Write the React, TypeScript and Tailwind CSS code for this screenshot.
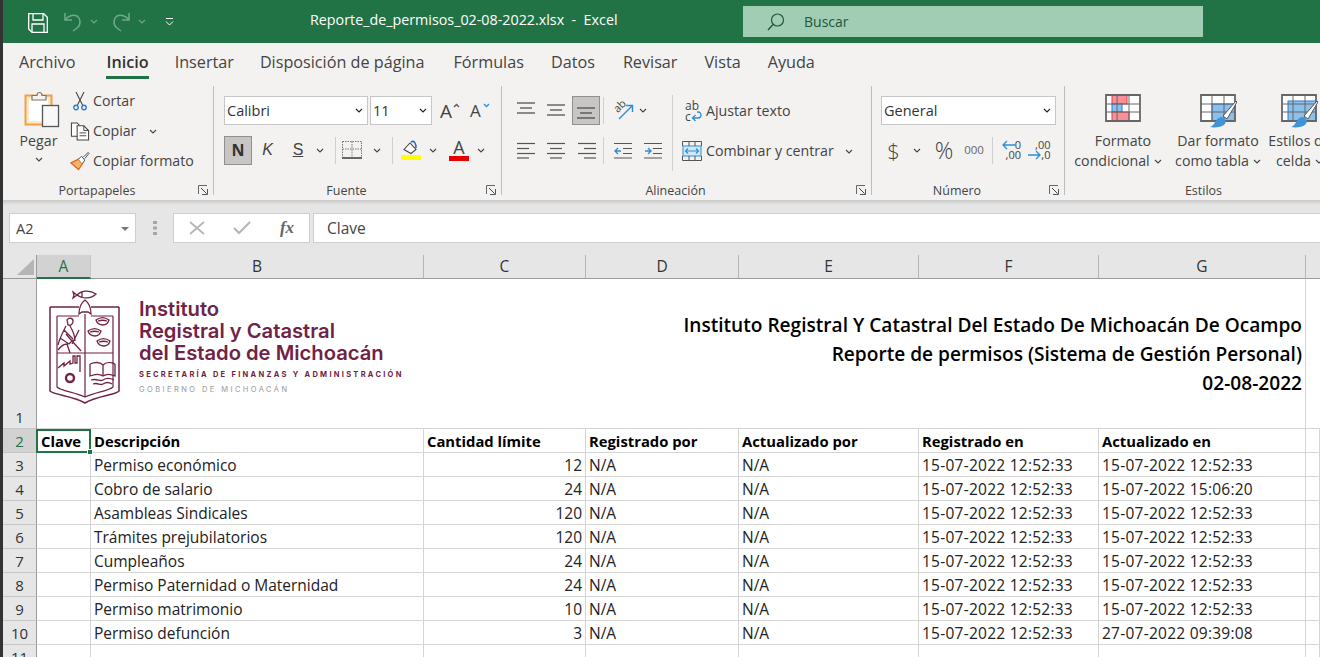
import type { ReactNode } from "react"

const UI = "font-['Open_Sans',sans-serif]"

const columns = [
  { id: "A", w: "w-[54px]" },
  { id: "B", w: "w-[333px]" },
  { id: "C", w: "w-[162px]" },
  { id: "D", w: "w-[153px]" },
  { id: "E", w: "w-[180px]" },
  { id: "F", w: "w-[180px]" },
  { id: "G", w: "w-[207px]" },
]

const rows = [
  ["Permiso económico", "12", "15-07-2022 12:52:33"],
  ["Cobro de salario", "24", "15-07-2022 15:06:20"],
  ["Asambleas Sindicales", "120", "15-07-2022 12:52:33"],
  ["Trámites prejubilatorios", "120", "15-07-2022 12:52:33"],
  ["Cumpleaños", "24", "15-07-2022 12:52:33"],
  ["Permiso Paternidad o Maternidad", "24", "15-07-2022 12:52:33"],
  ["Permiso matrimonio", "10", "15-07-2022 12:52:33"],
  ["Permiso defunción", "3", "27-07-2022 09:39:08"],
]

function Chevron({ className = "", color = "#444" }: { className?: string; color?: string }) {
  return (
    <svg width="8" height="5" viewBox="0 0 8 5" className={`shrink-0 ${className}`}>
      <path d="M1 1l3 3 3-3" fill="none" stroke={color} strokeWidth="1.1" />
    </svg>
  )
}

function Launcher() {
  return (
    <svg width="10" height="10" viewBox="0 0 10 10" className="shrink-0">
      <path d="M.5 9V.5H9" fill="none" stroke="#666" />
      <path d="M3 3l5.5 5.5" fill="none" stroke="#444" />
      <path d="M9.5 4v5.5H4" fill="none" stroke="#555" />
    </svg>
  )
}

function AlignH({ kind }: { kind: "left" | "center" | "right" }) {
  const ds = {
    left: ["M0 2.5H18", "M0 7.5H12", "M0 12.5H18", "M0 17H12"],
    center: ["M0 2.5H18", "M3 7.5H15", "M0 12.5H18", "M3 17H15"],
    right: ["M0 2.5H18", "M6 7.5H18", "M0 12.5H18", "M6 17H18"],
  }[kind]
  return (
    <svg width="18" height="18" viewBox="0 0 18 18">
      {ds.map((d) => (
        <path key={d} d={d} stroke="#555" strokeWidth="1.2" />
      ))}
    </svg>
  )
}

function AlignV({ kind }: { kind: "top" | "middle" | "bottom" }) {
  const ds = {
    top: ["M0 2H18", "M3 7H15", "M0 12H18"],
    middle: ["M0 4H18", "M3 9H15", "M0 14H18"],
    bottom: ["M0 7H18", "M3 12H15", "M0 17H18"],
  }[kind]
  return (
    <svg width="18" height="18" viewBox="0 0 18 18">
      {ds.map((d) => (
        <path key={d} d={d} stroke="#444" strokeWidth="1.2" />
      ))}
    </svg>
  )
}

function Indent({ dir }: { dir: "in" | "out" }) {
  return (
    <svg width="18" height="18" viewBox="0 0 18 18">
      <path d="M0 2.5H18M9 7.5H18M9 12.5H18M0 17H18" stroke="#555" strokeWidth="1.2" />
      {dir === "out" ? (
        <path d="M7 10H1M4 7l-3 3 3 3" fill="none" stroke="#2b8ed6" strokeWidth="1.4" />
      ) : (
        <path d="M1 10H7M4 7l3 3-3 3" fill="none" stroke="#2b8ed6" strokeWidth="1.4" />
      )}
    </svg>
  )
}

function PasteIcon() {
  return (
    <svg width="36" height="38" viewBox="0 0 36 38" className="ml-[6px]">
      <rect x="1.5" y="5.5" width="26" height="29" fill="#fbe8cd" stroke="#ef9f45" strokeWidth="2" />
      <rect x="5" y="9" width="19" height="22" fill="#fff" />
      <path d="M8 10V5.5h5c0-4 5-4 5 0h4V10z" fill="#f3f2f1" stroke="#777" strokeWidth="1.2" />
      <rect x="18.5" y="15.5" width="16" height="21" fill="#f8f8f8" stroke="#555" strokeWidth="1.3" />
    </svg>
  )
}

function ScissorsIcon() {
  return (
    <svg width="14" height="20" viewBox="0 0 14 20">
      <path d="M3 1l6.5 13M11 1L4.5 14" fill="none" stroke="#444" strokeWidth="1.1" />
      <circle cx="3" cy="16.5" r="2.2" fill="none" stroke="#2b7cd3" strokeWidth="1.4" />
      <circle cx="11" cy="16.5" r="2.2" fill="none" stroke="#2b7cd3" strokeWidth="1.4" />
    </svg>
  )
}

function CopyIcon() {
  return (
    <svg width="21" height="20" viewBox="0 0 21 20">
      <path d="M8 15.5H1.5V1.5h6L10 4" fill="#fff" stroke="#444" strokeWidth="1.1" />
      <path d="M7.5 4.5h7l5 5v10h-12z" fill="#fff" stroke="#444" strokeWidth="1.1" />
      <path d="M14.5 4.5v5h5M10 12h7M10 15h7" fill="none" stroke="#444" strokeWidth="1" />
    </svg>
  )
}

function BrushIcon() {
  return (
    <svg width="21" height="20" viewBox="0 0 21 20">
      <path d="M1 12l8-4 4 5-4 6z" fill="#f6b26b" stroke="#d9691e" strokeWidth="1.3" />
      <path d="M9 8l3-3 3.5 4-2.5 4M14 6l5-5 1 1-4.5 5.5" fill="#fff" stroke="#444" strokeWidth="1" />
    </svg>
  )
}

function BordersIcon() {
  return (
    <svg width="20" height="20" viewBox="0 0 20 20">
      <path d="M.5 1.5H19.5V17M.5 1.5V17M10 1.5V17M.5 9H19.5" fill="none" stroke="#777" strokeDasharray="1.5 1" />
      <path d="M0 18H20" stroke="#444" strokeWidth="1.6" />
    </svg>
  )
}

function FillIcon() {
  return (
    <svg width="20" height="20" viewBox="0 0 20 20">
      <path d="M3 9.5L9 3l6 6.5-5 4z" fill="#fff" stroke="#444" strokeWidth="1.1" />
      <path d="M10 2c3-2 5 1 5 6" fill="none" stroke="#2b6fb5" strokeWidth="1.6" />
      <rect x="0" y="15" width="20" height="5" fill="#ffff00" />
    </svg>
  )
}

function FontColorIcon() {
  return (
    <div className="flex flex-col items-center w-[20px]">
      <span className="text-[18px] leading-[17px] text-[#444]">A</span>
      <div className="h-[5px] w-[20px] bg-[#e60000]" />
    </div>
  )
}

function OrientationIcon() {
  return (
    <div className="relative w-[21px] h-[22px]">
      <span className="absolute left-0 top-0 text-[11px] leading-[14px] text-[#444] -rotate-45">ab</span>
      <svg width="21" height="22" viewBox="0 0 21 22" className="absolute left-0 top-0">
        <path d="M6 20L19 7M13 6.5h6.5V13" fill="none" stroke="#2b8ed6" strokeWidth="1.4" />
      </svg>
    </div>
  )
}

function WrapIcon() {
  return (
    <div className="relative w-[18px] h-[22px] text-[12px] leading-[11px] text-[#444]">
      <span className="absolute left-0 top-0">ab</span>
      <span className="absolute left-0 bottom-0">c</span>
      <svg width="12" height="12" viewBox="0 0 12 12" className="absolute right-0 bottom-0">
        <path d="M2 8h5c4 0 4-6 0-6H6M4.5 5L1.5 8l3 3" fill="none" stroke="#2b8ed6" strokeWidth="1.3" />
      </svg>
    </div>
  )
}

function MergeIcon() {
  return (
    <svg width="20" height="20" viewBox="0 0 20 20" className="-ml-[3px] shrink-0">
      <rect x="1" y="5" width="18" height="10" fill="#d5e8f7" stroke="#2b8ed6" />
      <path d="M.5 5V.5h19V5M.5 15v4.5h19V15M7 .5V5M13 .5V5M7 15v4.5M13 15v4.5" fill="none" stroke="#555" />
      <path d="M4 10h12M6 7.5L3.5 10 6 12.5M14 7.5l2.5 2.5-2.5 2.5" fill="none" stroke="#2b8ed6" strokeWidth="1.2" />
    </svg>
  )
}

function DecimalIcon({ more }: { more?: boolean }) {
  return (
    <div className="flex flex-col items-end w-[20px] text-[11px] leading-[10px] text-[#444]">
      {more ? (
        <>
          <span>,00</span>
          <div className="flex items-center">
            <svg width="13" height="10" viewBox="0 0 13 10">
              <path d="M0 5h12M8 1l4 4-4 4" fill="none" stroke="#2b8ed6" strokeWidth="1.3" />
            </svg>
            <span>,0</span>
          </div>
        </>
      ) : (
        <>
          <div className="flex items-center">
            <svg width="14" height="10" viewBox="0 0 14 10">
              <path d="M2 5h12M6 1L2 5l4 4" fill="none" stroke="#2b8ed6" strokeWidth="1.3" />
            </svg>
            <span>0</span>
          </div>
          <span>,00</span>
        </>
      )}
    </div>
  )
}

function StyleIcon({ kind }: { kind: "cond" | "table" | "cell" }) {
  return (
    <svg width="37" height="34" viewBox="0 0 37 34" className="shrink-0">
      <rect x="1" y="1" width="34" height="26" fill="#fff" />
      {kind === "cond" && (
        <>
          <rect x="7" y="1" width="15" height="9" fill="#f98f98" stroke="#e03c3c" />
          <rect x="7" y="10" width="10" height="8" fill="#8cc0ec" stroke="#2b7cd3" />
          <rect x="7" y="18" width="17" height="9" fill="#f98f98" stroke="#e03c3c" />
        </>
      )}
      {kind === "table" && <rect x="12" y="10" width="23" height="17" fill="#8cc0ec" stroke="#2b7cd3" />}
      {kind === "cell" && <rect x="7" y="7" width="28" height="20" fill="#8cc0ec" stroke="#2b7cd3" />}
      <path d="M1 10h34M1 18h34M12 1v26M24 1v26" fill="none" stroke="#666" strokeWidth="1" />
      <path d="M1 1h34v26H1z" fill="none" stroke="#666" strokeWidth="1.8" />
      {kind !== "cond" && (
        <>
          <path d="M23 22l13-15 1 1-10 17z" fill="#fff" stroke="#555" strokeWidth="1" />
          <path d="M10 33c5-1 5-9 11-10 5 0 6 5 3 8-3 2-9 3-14 2z" fill="#3f93d6" />
        </>
      )}
    </svg>
  )
}

function Select({ value, w }: { value: string; w: string }) {
  return (
    <div className={`${w} h-[29px] bg-white border border-[#c6c6c6] flex items-center justify-between pl-[2px] pr-[4px] text-[14.5px] text-[#333]`}>
      <span>{value}</span>
      <Chevron color="#222" />
    </div>
  )
}

function Slot({ w, children, className = "" }: { w: string; children: ReactNode; className?: string }) {
  return <div className={`${w} flex shrink-0 items-center justify-center ${className}`}>{children}</div>
}

function Sep() {
  return <div className="w-px h-[27px] shrink-0 bg-[#cfcfcf]" />
}

function Group({ label, w, children, launcher = true }: { label: string; w: string; children: ReactNode; launcher?: boolean }) {
  return (
    <div className={`${w} shrink-0 h-full flex flex-col border-r border-[#bdbdbd] last:border-r-0`}>
      <div className="flex-1 min-h-0">{children}</div>
      <div className={`h-[14px] pt-[6px] flex items-center relative text-[12.5px] text-[#444] ${launcher ? "pr-[22px]" : "pl-[22px]"}`}>
        <span className="flex-1 text-center">{label}</span>
        {launcher && (
          <span className="absolute right-[5px] top-[4px] flex">
            <Launcher />
          </span>
        )}
      </div>
    </div>
  )
}

function Shield() {
  const c = "#6f2346"
  return (
    <svg width="72" height="114" viewBox="0 0 72 114" className="shrink-0">
      <g fill="none" stroke={c} strokeWidth="1.3">
        {/* fish + arch */}
        <path d="M28 5c5-5 13-5 19-1-5 5-14 5-19 1zM28 5l-4-3 1 3-1 3zM33 2.5v5" />
        <path d="M36 10c-4 3-6 8-6 14l3-2h6l3 2c0-6-2-11-6-14z" />
        {/* shield frames */}
        <path d="M1 17h29M42 17h28M1 17v84c4 4 24 5 35 12 11-7 31-8 34-12V17" strokeWidth="1.5" />
        <path d="M8 26h22M42 26h22M8 26v71c4 4 18 5 28 10 10-5 24-6 28-10V26M36 24v83M8 63h56" strokeWidth="1.2" />
        {/* figure */}
        <path d="M18 30c2-3 6-2 6 1 0 3-2 5-5 4zM17 36c-3 6-6 11-8 19M21 36c3 5 5 10 5 15M11 48l9 6 4-4M9 60c3-4 6-6 9-6l3 9M17 44l6 7M24 52l8 9M15 40l9 9M30 40l-7 14" />
        {/* bowls */}
        <path d="M47 30c4-3 9-3 13 0-1 3-3 5-6 5s-6-2-7-5zM49 31c3-1 6-1 9 0" />
        <path d="M39 41c4-3 9-3 13 0-1 3-3 5-6 5s-6-2-7-5zM41 42c3-1 6-1 9 0" />
        <path d="M48 51c4-3 9-3 13 0-1 3-3 5-6 5s-6-2-7-5zM50 52c3-1 6-1 9 0" />
        {/* factory + gear */}
        <path d="M9 78l6-5v3l6-5v3l3-1v-7h2v7h2v-7h3v16" />
        <circle cx="21" cy="88" r="4" strokeWidth="2.4" />
        {/* book */}
        <path d="M41 74c5-2 10-2 13 1 3-3 8-3 12-1M41 74v12c5-2 10-2 13 0 3-2 8-2 12 0V74M54 75v11M42 90c6-2 9 2 12 0s7-2 11 0M44 94c5-2 7 2 10 0s6-2 9 0" />
      </g>
    </svg>
  )
}

function Logo() {
  return (
    <div className="flex items-start gap-[18px] pl-[12px] pt-[11px]">
      <Shield />
      <div className="pt-[8px] text-[#6f2346] font-['Inter',sans-serif] whitespace-nowrap">
        <div className="font-semibold text-[20.2px] leading-[22px]">
          <div>Instituto</div>
          <div>Registral y Catastral</div>
          <div>del Estado de Michoacán</div>
        </div>
        <div className="mt-[6px] font-bold text-[7.5px] leading-[10px] tracking-[2.28px]">SECRETARÍA DE FINANZAS Y ADMINISTRACIÓN</div>
        <div className="mt-[5px] text-[7.5px] leading-[10px] tracking-[2.43px] text-[#999]">GOBIERNO DE MICHOACÁN</div>
      </div>
    </div>
  )
}

function RowHead({ n, active }: { n: number; active?: boolean }) {
  return (
    <div className={`w-[34px] h-[24px] shrink-0 flex items-center justify-center pt-[2px] border-r border-b border-r-[#9a9a9a] border-b-[#c6c6c6] text-[15px] ${active ? "bg-[#d2d2d2] text-[#217346]" : "bg-[#e6e6e6] text-[#333]"}`}>
      {n}
    </div>
  )
}

function Cell({ w, children, className = "" }: { w: string; children?: ReactNode; className?: string }) {
  return (
    <div className={`${w} h-[24px] shrink-0 flex items-center px-[3px] pt-[2px] border-r border-b border-[#d4d4d4] whitespace-nowrap overflow-hidden ${className}`}>
      {children}
    </div>
  )
}

export default function App() {
  const head = ["Clave", "Descripción", "Cantidad límite", "Registrado por", "Actualizado por", "Registrado en", "Actualizado en"]

  return (
    <div className={`${UI} w-[1320px] h-[657px] overflow-hidden bg-white flex`}>
      <div className="w-[3px] shrink-0 bg-[#333333]" />
      <div className="w-[1317px] shrink-0 flex flex-col">
        {/* title bar */}
        <div className="h-[43px] shrink-0 bg-[#217346] flex items-start text-white">
          <div className="w-[25px] shrink-0" />
          <svg width="20" height="20" viewBox="0 0 20 20" className="mt-[13px] shrink-0">
            <path d="M.7.7h15l3.6 3.6v15H4L.7 16z" fill="none" stroke="#fff" strokeWidth="1.3" />
            <path d="M5 1v6h10V1M4 19v-8h12v8" fill="none" stroke="#fff" strokeWidth="1.3" />
          </svg>
          <svg width="18" height="20" viewBox="0 0 18 20" className="ml-[16px] mt-[12px] shrink-0">
            <path d="M1 1v7h7M1 8c3-4 8-6 12-4 4 3 4 9 0 12l-4 3" fill="none" stroke="#6fa98b" strokeWidth="1.5" />
          </svg>
          <Chevron className="ml-[8px] mt-[19px]" color="#6fa98b" />
          <svg width="18" height="20" viewBox="0 0 18 20" className="ml-[14px] mt-[12px] shrink-0">
            <path d="M17 1v7h-7M17 8c-3-4-8-6-12-4-4 3-4 9 0 12l4 3" fill="none" stroke="#6fa98b" strokeWidth="1.5" />
          </svg>
          <Chevron className="ml-[8px] mt-[19px]" color="#6fa98b" />
          <svg width="9" height="9" viewBox="0 0 9 9" className="ml-[19px] mt-[18px] shrink-0">
            <path d="M1 .5h7M1 3.5l3.5 3.5L8 3.5" fill="none" stroke="#fff" />
          </svg>
          <div className="w-[136px] shrink-0" />
          <div className="mt-[10px] w-[311px] shrink-0 whitespace-nowrap leading-[20px] text-[14.3px]">Reporte_de_permisos_02-08-2022.xlsx&nbsp; -&nbsp; Excel</div>
          <div className="ml-[122px] mt-[6px] w-[460px] h-[31px] bg-[#a0cdb3] flex items-center shrink-0 text-[#22573c]">
            <svg width="18" height="18" viewBox="0 0 18 18" className="ml-[24px]">
              <circle cx="10.5" cy="7" r="6" fill="none" stroke="#22573c" strokeWidth="1.2" />
              <path d="M6 11.5L1 17" stroke="#22573c" strokeWidth="1.4" />
            </svg>
            <span className="ml-[19px] text-[14px]">Buscar</span>
          </div>
        </div>

        {/* tabs */}
        <div className="h-[39px] shrink-0 bg-[#f3f2f1] flex items-start pl-[16px] text-[16.2px] text-[#444] whitespace-nowrap">
          <span className="mt-[7px] leading-[24px]">Archivo</span>
          <div className="ml-[31px] flex flex-col items-stretch mt-[7px]">
            <span className="leading-[24px] font-semibold text-[#333]">Inicio</span>
            <div className="mt-[2px] h-[3px] bg-[#217346]" />
          </div>
          <span className="ml-[26px] mt-[7px] leading-[24px]">Insertar</span>
          <span className="ml-[26px] mt-[7px] leading-[24px]">Disposición de página</span>
          <span className="ml-[29px] mt-[7px] leading-[24px]">Fórmulas</span>
          <span className="ml-[27px] mt-[7px] leading-[24px]">Datos</span>
          <span className="ml-[28px] mt-[7px] leading-[24px]">Revisar</span>
          <span className="ml-[27px] mt-[7px] leading-[24px]">Vista</span>
          <span className="ml-[27px] mt-[7px] leading-[24px]">Ayuda</span>
        </div>

        {/* ribbon */}
        <div className="h-[118px] shrink-0 bg-[#f3f2f1] flex pt-[4px] pb-[5px] overflow-hidden text-[14.2px] text-[#444] whitespace-nowrap">
          <Group label="Portapapeles" w="w-[211px]">
            <div className="flex">
              <div className="w-[67px] shrink-0 flex flex-col items-center pl-[4px] pt-[4px]">
                <PasteIcon />
                <span className="mt-[2px] leading-[22px]">Pegar</span>
                <Chevron className="mt-[5px]" />
              </div>
              <div className="flex flex-col">
                <div className="h-[30px] flex items-center"><Slot w="w-[23px]" className="pr-[3px]"><ScissorsIcon /></Slot><span>Cortar</span></div>
                <div className="h-[30px] flex items-center"><Slot w="w-[23px]" className="pr-[3px]"><CopyIcon /></Slot><span>Copiar</span><Chevron className="ml-[13px]" /></div>
                <div className="h-[30px] flex items-center"><Slot w="w-[23px]" className="pr-[3px]"><BrushIcon /></Slot><span>Copiar formato</span></div>
              </div>
            </div>
          </Group>

          <Group label="Fuente" w="w-[288px]">
            <div className="pl-[10px] pt-[10px]">
              <div className="flex items-center">
                <Select value="Calibri" w="w-[144px]" />
                <Select value="11" w="w-[62px] ml-[2px]" />
                <div className="ml-[8px] w-[18px] text-[19px] leading-[20px] relative">
                  A
                  <svg width="7" height="5" viewBox="0 0 7 5" className="absolute -right-[2px] top-[2px]"><path d="M1 4l2.5-2.5L6 4" fill="none" stroke="#555" strokeWidth="1.3" /></svg>
                </div>
                <div className="ml-[12px] w-[18px] text-[17px] leading-[20px] relative">
                  A
                  <svg width="7" height="5" viewBox="0 0 7 5" className="absolute -right-[2px] top-[2px]"><path d="M1 1l2.5 2.5L6 1" fill="none" stroke="#2b8ed6" strokeWidth="1.3" /></svg>
                </div>
              </div>
              <div className="flex items-center mt-[10px] h-[30px]">
                <div className="w-[28px] h-[29px] bg-[#c8c6c4] border border-[#8f8f8f] flex items-center justify-center font-bold text-[16px] text-[#333]">N</div>
                <Slot w="w-[31px]"><span className="italic text-[16px] font-['Liberation_Sans',sans-serif]">K</span></Slot>
                <Slot w="w-[30px]"><span className="underline text-[16px] font-['Liberation_Sans',sans-serif]">S</span></Slot>
                <Slot w="w-[14px]"><Chevron /></Slot>
                <div className="w-[8px]" /><Sep />
                <Slot w="w-[26px]" className="pl-[5px]"><BordersIcon /></Slot>
                <Slot w="w-[24px]" className="pl-[5px]"><Chevron /></Slot>
                <div className="w-[6px]" /><Sep />
                <Slot w="w-[28px]" className="pl-[8px]"><FillIcon /></Slot>
                <Slot w="w-[22px]" className="pl-[2px]"><Chevron /></Slot>
                <Slot w="w-[30px]" className="pl-[2px]"><FontColorIcon /></Slot>
                <Slot w="w-[13px]" className="pl-[2px]"><Chevron /></Slot>
              </div>
            </div>
          </Group>

          <Group label="Alineación" w="w-[370px]">
            <div className="pl-[9px] pt-[9px] flex">
              <div className="flex flex-col">
                <div className="flex items-center h-[30px]">
                  <Slot w="w-[30px]"><AlignV kind="top" /></Slot>
                  <Slot w="w-[30px]"><AlignV kind="middle" /></Slot>
                  <div className="ml-[1px] w-[28px] h-[29px] bg-[#c8c6c4] border border-[#8f8f8f] flex items-center justify-center"><AlignV kind="bottom" /></div>
                  <div className="w-[3px]" /><Sep />
                  <Slot w="w-[30px]" className="pl-[8px]"><OrientationIcon /></Slot>
                  <Slot w="w-[18px]"><Chevron /></Slot>
                </div>
                <div className="flex items-center h-[30px] mt-[10px]">
                  <Slot w="w-[30px]"><AlignH kind="left" /></Slot>
                  <Slot w="w-[30px]"><AlignH kind="center" /></Slot>
                  <Slot w="w-[32px]"><AlignH kind="right" /></Slot>
                  <Sep />
                  <Slot w="w-[30px]" className="pl-[8px]"><Indent dir="out" /></Slot>
                  <Slot w="w-[38px]"><Indent dir="in" /></Slot>
                </div>
              </div>
              <div className="w-px h-[76px] bg-[#cfcfcf] shrink-0" />
              <div className="flex flex-col pl-[12px] pt-[1px]">
                <div className="flex items-center h-[30px]"><WrapIcon /><span className="ml-[3px]">Ajustar texto</span></div>
                <div className="flex items-center h-[30px] mt-[10px]"><MergeIcon /><span className="ml-[4px]">Combinar y centrar</span><Chevron className="ml-[11px]" /></div>
              </div>
            </div>
          </Group>

          <Group label="Número" w="w-[193px]">
            <div className="pl-[9px] pt-[10px]">
              <Select value="General" w="w-[175px]" />
              <div className="flex items-center h-[30px] mt-[10px]">
                <Slot w="w-[25px]"><span className="text-[22px] leading-[24px] font-light">$</span></Slot>
                <Slot w="w-[20px]" className="pl-[2px]"><Chevron /></Slot>
                <Slot w="w-[36px]"><span className="text-[23px] leading-[24px] font-light">%</span></Slot>
                <Slot w="w-[24px]"><span className="text-[11.5px] text-[#666]">000</span></Slot>
                <div className="w-[6px]" /><Sep />
                <Slot w="w-[28px]" className="pl-[8px]"><DecimalIcon /></Slot>
                <Slot w="w-[30px]" className="pl-[9px]"><DecimalIcon more /></Slot>
              </div>
            </div>
          </Group>

          <Group label="Estilos" w="w-[255px]" launcher={false}>
            <div className="flex pt-[8px] text-center leading-[20px]">
              <div className="w-[96px] shrink-0 flex flex-col items-center pl-[20px]">
                <StyleIcon kind="cond" />
                <span className="mt-[3px]">Formato</span>
                <span className="flex items-center -ml-[10px]">condicional<Chevron className="ml-[4px]" /></span>
              </div>
              <div className="w-[92px] shrink-0 flex flex-col items-center pl-[22px]">
                <StyleIcon kind="table" />
                <span className="mt-[3px]">Dar formato</span>
                <span className="flex items-center">como tabla<Chevron className="ml-[4px]" /></span>
              </div>
              <div className="w-[80px] shrink-0 flex flex-col items-center pl-[13px]">
                <StyleIcon kind="cell" />
                <span className="mt-[3px]">Estilos de</span>
                <span className="flex items-center">celda<Chevron className="ml-[4px]" /></span>
              </div>
            </div>
          </Group>
        </div>

        {/* ribbon shadow + formula bar */}
        <div className="h-[5px] shrink-0 bg-gradient-to-b from-[#c9c9c9] to-[#e6e6e6]" />
        <div className="h-[50px] shrink-0 bg-[#e6e6e6] flex items-start pt-[8px] text-[#444] text-[14.5px]">
          <div className="ml-[6px] w-[127px] h-[30px] bg-white border border-[#cfcfcf] flex items-center justify-between pl-[6px] pr-[6px] pt-[1px] shrink-0">
            <span>A2</span>
            <svg width="8" height="4" viewBox="0 0 8 4"><path d="M0 0h8L4 4z" fill="#777" /></svg>
          </div>
          <svg width="4" height="14" viewBox="0 0 4 14" className="ml-[17px] mt-[8px] shrink-0">
            <path d="M0 0h4v3H0zM0 5.5h4v3H0zM0 11h4v3H0z" fill="#a6a6a6" />
          </svg>
          <div className="ml-[16px] w-[137px] h-[30px] bg-white border border-[#cfcfcf] flex items-center shrink-0">
            <Slot w="w-[45px]">
              <svg width="16" height="14" viewBox="0 0 16 14"><path d="M1 1l14 12M15 1L1 13" stroke="#b5b5b5" strokeWidth="1.8" /></svg>
            </Slot>
            <Slot w="w-[46px]">
              <svg width="18" height="14" viewBox="0 0 18 14"><path d="M1 7l5 5L17 1" fill="none" stroke="#b5b5b5" strokeWidth="2" /></svg>
            </Slot>
            <Slot w="w-[44px]"><span className="font-['Liberation_Serif',serif] italic font-bold text-[#666] text-[17px]">fx</span></Slot>
          </div>
          <div className="ml-[3px] flex-1 h-[30px] bg-white border border-[#cfcfcf] border-r-0 flex items-center pl-[13px] pt-[1px] text-[15.5px]">Clave</div>
        </div>

        {/* column headers */}
        <div className="h-[24px] shrink-0 flex text-[15.5px] text-[#333]">
          <div className="w-[34px] shrink-0 bg-[#e6e6e6] border-b border-r border-[#9a9a9a] flex items-end justify-end pr-[2px] pb-[2px]">
            <svg width="17" height="17" viewBox="0 0 17 17"><path d="M17 0v16H0z" fill="#b5b5b5" /></svg>
          </div>
          {columns.map((c, i) => (
            <div key={c.id} className={`${c.w} shrink-0 flex items-center justify-center pt-[1px] border-r ${i === 0 ? "bg-[#d2d2d2] text-[#217346] border-b-2 border-b-[#217346] border-r-[#c6c6c6]" : "bg-[#e6e6e6] border-b border-b-[#9a9a9a] border-r-[#b5b5b5]"}`}>
              {c.id}
            </div>
          ))}
          <div className="flex-1 bg-[#e6e6e6] border-b border-[#9a9a9a]" />
        </div>

        {/* sheet */}
        <div className="flex-1 min-h-0 overflow-hidden text-[15.5px] text-[#222]">
          <div className="flex h-[150px]">
            <div className="w-[34px] shrink-0 bg-[#e6e6e6] border-r border-b border-r-[#9a9a9a] border-b-[#c6c6c6] flex items-end justify-center text-[15px] text-[#333] leading-[22px]">1</div>
            <div className="w-[1269px] shrink-0 flex justify-between border-r border-b border-[#d4d4d4]">
              <Logo />
              <div className="pt-[32px] pr-[3px] text-right font-semibold text-[19.1px] leading-[29px] text-black whitespace-nowrap">
                <div>Instituto Registral Y Catastral Del Estado De Michoacán De Ocampo</div>
                <div>Reporte de permisos (Sistema de Gestión Personal)</div>
                <div>02-08-2022</div>
              </div>
            </div>
            <div className="flex-1 border-b border-[#d4d4d4]" />
          </div>

          <div className="flex">
            <RowHead n={2} active />
            {columns.map((c, i) =>
              i === 0 ? (
                <div key={c.id} className="w-[55px] -ml-px h-[24px] shrink-0 relative flex items-center pl-[3px] pt-[1px] border-2 border-[#217346] font-bold text-[14.8px] text-black">
                  {head[i]}
                  <span className="absolute -right-[4px] -bottom-[4px] h-[6px] w-[6px] bg-[#217346] border border-white" />
                </div>
              ) : (
                <Cell key={c.id} w={c.w} className="font-bold text-[14.8px] text-black">{head[i]}</Cell>
              ),
            )}
            <Cell w="flex-1" />
          </div>

          {rows.map((r, i) => (
            <div key={r[0]} className="flex">
              <RowHead n={i + 3} />
              <Cell w={columns[0].w} />
              <Cell w={columns[1].w}>{r[0]}</Cell>
              <Cell w={columns[2].w} className="justify-end">{r[1]}</Cell>
              <Cell w={columns[3].w}>N/A</Cell>
              <Cell w={columns[4].w}>N/A</Cell>
              <Cell w={columns[5].w} className="tracking-[0.25px]">15-07-2022 12:52:33</Cell>
              <Cell w={columns[6].w} className="tracking-[0.25px]">{r[2]}</Cell>
              <Cell w="flex-1" />
            </div>
          ))}

          <div className="flex">
            <RowHead n={11} />
            {columns.map((c) => (
              <Cell key={c.id} w={c.w} />
            ))}
            <Cell w="flex-1" />
          </div>
        </div>
      </div>
    </div>
  )
}
